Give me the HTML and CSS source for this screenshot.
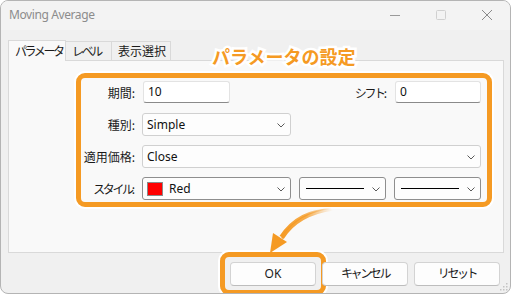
FILE: index.html
```html
<!DOCTYPE html>
<html lang="ja">
<head>
<meta charset="utf-8">
<title>Moving Average</title>
<link rel="stylesheet" href="styles.css">
</head>
<body>
<div class="window">
  <div class="titlebar">
    <span class="title">Moving Average</span>
    <div class="controls">
      <span class="ctl"><svg width="12" height="12" viewBox="0 0 12 12"><path d="M1 6.5H11" stroke="#9a9a9a" stroke-width="1"/></svg></span>
      <span class="ctl"><svg width="12" height="12" viewBox="0 0 12 12"><rect x="1.5" y="1.5" width="9" height="9" rx="1" fill="none" stroke="#d0d0d0" stroke-width="1"/></svg></span>
      <span class="ctl"><svg width="12" height="12" viewBox="0 0 12 12"><path d="M1 1L11 11M11 1L1 11" stroke="#8a8a8a" stroke-width="1"/></svg></span>
    </div>
  </div>

  <div class="tabs">
    <span class="tab active"><span class="kana">パラメータ</span></span>
    <span class="tab"><span class="kana">レベル</span></span>
    <span class="tab">表示選択</span>
  </div>

  <div class="panel">
    <div class="highlight">
      <div class="form">
        <span class="label">期間:</span>
        <div class="input short">10</div>
        <span class="label c3"><span class="kana">シフト</span>:</span>
        <div class="input c4">0</div>

        <span class="label">種別:</span>
        <div class="combo light"><span class="val">Simple</span><svg class="chev" width="8" height="5" viewBox="0 0 8 5"><path d="M0.5 0.5L4 4L7.5 0.5" fill="none" stroke="#5a5a5a"/></svg></div>

        <span class="label">適用価格:</span>
        <div class="combo light wide"><span class="val">Close</span><svg class="chev" width="8" height="5" viewBox="0 0 8 5"><path d="M0.5 0.5L4 4L7.5 0.5" fill="none" stroke="#5a5a5a"/></svg></div>

        <span class="label"><span class="kana">スタイル</span>:</span>
        <div class="combo dark"><span class="swatch"></span><span class="val red">Red</span><svg class="chev" width="8" height="5" viewBox="0 0 8 5"><path d="M0.5 0.5L4 4L7.5 0.5" fill="none" stroke="#5a5a5a"/></svg></div>
        <div class="combo dark"><span class="line"></span><svg class="chev" width="8" height="5" viewBox="0 0 8 5"><path d="M0.5 0.5L4 4L7.5 0.5" fill="none" stroke="#5a5a5a"/></svg></div>
        <div class="combo dark"><span class="line"></span><svg class="chev" width="8" height="5" viewBox="0 0 8 5"><path d="M0.5 0.5L4 4L7.5 0.5" fill="none" stroke="#5a5a5a"/></svg></div>
      </div>
    </div>
  </div>

  <div class="buttons">
    <button class="btn ok">OK</button>
    <button class="btn"><span class="kana">キャンセル</span></button>
    <button class="btn"><span class="kana">リセット</span></button>
  </div>

  <span class="callout">パラメータの設定</span>

  <svg class="arrow" width="80" height="50" viewBox="0 0 80 50">
    <defs>
      <linearGradient id="fade" x1="72" y1="3" x2="22" y2="34" gradientUnits="userSpaceOnUse">
        <stop offset="0" stop-color="#f59a23" stop-opacity="0"/>
        <stop offset="0.45" stop-color="#f59a23" stop-opacity="0.8"/>
        <stop offset="1" stop-color="#f59a23"/>
      </linearGradient>
    </defs>
    <path d="M72 3 Q40 6 22 31 L19.5 30 Q38 2 72 2.5 Z" fill="url(#fade)"/>
    <path d="M23 31 Q38 8 72 3" fill="none" stroke="url(#fade)" stroke-width="3.5" stroke-linecap="round"/>
    <path d="M10 47 L13 27 L27 36 Z" fill="#f59a23"/>
  </svg>

  <svg class="grip" width="8" height="8" viewBox="0 0 8 8">
    <g fill="#c4c4c4">
      <rect x="6" y="0" width="1.5" height="1.5"/>
      <rect x="3" y="3" width="1.5" height="1.5"/><rect x="6" y="3" width="1.5" height="1.5"/>
      <rect x="0" y="6" width="1.5" height="1.5"/><rect x="3" y="6" width="1.5" height="1.5"/><rect x="6" y="6" width="1.5" height="1.5"/>
    </g>
  </svg>
</div>
</body>
</html>
```

FILE: styles.css
```css
* { box-sizing: border-box; }

html, body {
  margin: 0;
  padding: 0;
  background: #ffffff;
}

body {
  font-family: "Noto Sans", "Noto Sans CJK JP", sans-serif;
  font-size: 12px;
  color: #1b1b1b;
}

.kana {
  letter-spacing: -2.4px;
}

.window {
  position: relative;
  width: 511px;
  height: 294px;
  background: #f0f0f0;
  border: 1px solid #b4b4b4;
  border-radius: 8px;
  overflow: hidden;
}

.titlebar {
  height: 29px;
  display: flex;
  align-items: center;
  justify-content: space-between;
  background: #f3f3f3;
}

.title {
  padding-left: 8px;
  color: #8c8c8c;
  font-size: 12px;
  line-height: 1;
  margin-top: -1px;
  letter-spacing: -0.4px;
}

.controls {
  display: flex;
  height: 100%;
}

.ctl {
  width: 46px;
  display: flex;
  align-items: center;
  justify-content: center;
  margin-top: -1px;
}

.tabs {
  display: flex;
  align-items: flex-end;
  margin: 10px 0 0 7px;
  height: 21px;
  position: relative;
  z-index: 1;
  font-family: "Noto Sans CJK JP", sans-serif;
}

.tab {
  height: 19px;
  line-height: 18px;
  padding: 0 0 0 6px;
  border: 1px solid #d9d9d9;
  border-bottom: none;
  background: #f0f0f0;
  font-size: 12px;
  color: #1b1b1b;
  margin-left: -1px;
  margin-bottom: 1px;
  white-space: nowrap;
}

.tab:nth-child(2) { width: 47px; }
.tab:nth-child(3) { width: 60px; padding-left: 6px; }

.tab.active {
  height: 21px;
  margin-left: 0;
  margin-bottom: 0;
  width: 58px;
  background: #f9f9f9;
  line-height: 20px;
  padding-left: 6px;
  z-index: 2;
  position: relative;
}

.panel {
  margin: -1px 6px 0 7px;
  height: 193px;
  background: #f9f9f9;
  border: 1px solid #d9d9d9;
  padding: 12px 0 0 67px;
}

.highlight {
  width: 416px;
  height: 134px;
  border: 5px solid #f59a23;
  border-radius: 9px;
  box-shadow: 0 0 0 2px #ffffff;
  padding: 3px 3px 0 0;
}

.form {
  display: grid;
  grid-template-columns: 53px 149px 87px 87px;
  grid-template-rows: 23px 23px 23px 23px;
  column-gap: 8px;
  row-gap: 9px;
}

.label {
  grid-column: 1;
  font-family: "Noto Sans CJK JP", sans-serif;
  text-align: right;
  align-self: center;
  white-space: nowrap;
  line-height: 1;
  margin-right: -1px;
}

.label.c3 { grid-column: 3; }

.input {
  height: 22px;
  background: #ffffff;
  border: 1px solid #e3e3e3;
  border-bottom: 1px solid #8a8a8a;
  border-radius: 3px;
  padding: 0 4px;
  line-height: 20px;
  color: #111;
}

.input.short { width: 87px; margin-left: 1px; }
.input.c4 { grid-column: 4; margin-left: 1px; }

.combo {
  height: 23px;
  display: flex;
  align-items: center;
  background: #fdfdfd;
  border: 1px solid #d2d2d2;
  border-radius: 3px;
  padding: 0 5px 0 4px;
  position: relative;
}

.combo.light { border-color: #d0d0d0; }
.combo.dark { border-color: #8e8e8e; }

.combo.wide { grid-column: 2 / 5; }

.val {
  flex: 1;
  line-height: 1;
  color: #111;
}

.val.red { padding-left: 6px; }

.swatch {
  width: 16px;
  height: 14px;
  background: #ff0000;
  border: 1px solid #8a8a8a;
}

.line {
  width: 58px;
  height: 1px;
  background: #000;
  margin-left: 2px;
  flex: none;
}

.combo .chev {
  position: absolute;
  right: 5px;
  top: 9px;
}

.buttons {
  display: flex;
  justify-content: flex-end;
  gap: 6px;
  margin-top: 9px;
  padding-right: 10px;
}

.btn {
  position: relative;
  width: 86px;
  height: 24px;
  background: #fdfdfd;
  border: 1px solid #d3d3d3;
  border-bottom-color: #bdbdbd;
  border-radius: 4px;
  font-family: "Noto Sans", "Noto Sans CJK JP", sans-serif;
  font-size: 12px;
  color: #1b1b1b;
  padding: 0;
  line-height: 22px;
}

.btn.ok::after {
  content: "";
  position: absolute;
  left: -11px;
  right: -11px;
  top: -11px;
  bottom: -10px;
  border: 5px solid #f59a23;
  border-radius: 9px;
  box-shadow: 0 0 0 2px #ffffff;
}

.callout {
  position: absolute;
  left: 211px;
  top: 45px;
  font-family: "Noto Sans CJK JP", sans-serif;
  font-weight: 700;
  font-size: 18px;
  line-height: 20px;
  color: #f59a23;
  -webkit-text-stroke: 5px #ffffff;
  paint-order: stroke fill;
  z-index: 3;
  letter-spacing: 0;
}

.arrow {
  position: absolute;
  left: 259px;
  top: 205px;
}

.grip {
  position: absolute;
  right: 2px;
  bottom: 2px;
}
```
